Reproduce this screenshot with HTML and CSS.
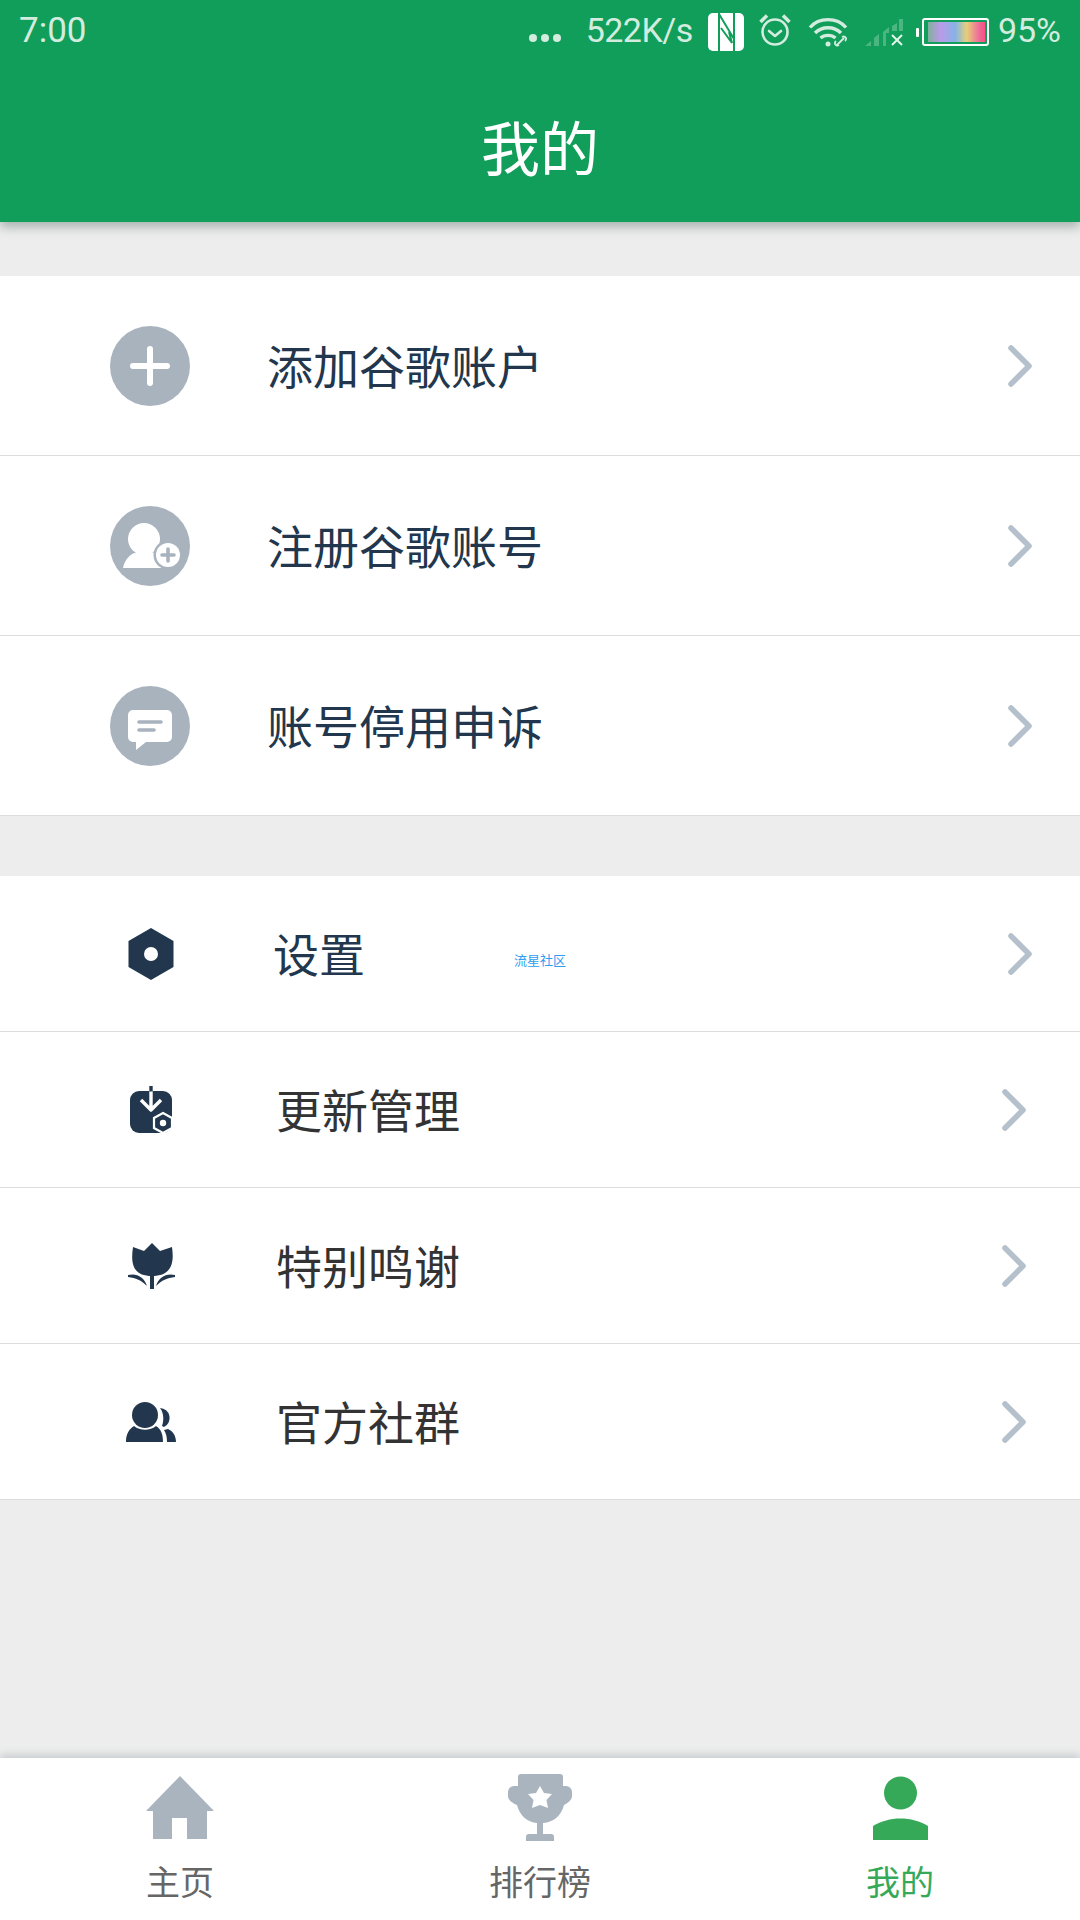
FILE: index.html
```html
<!DOCTYPE html>
<html lang="zh-CN">
<head>
<meta charset="utf-8">
<title>我的</title>
<link rel="stylesheet" href="styles.css">
</head>
<body>
<div class="app">
  <header class="header">
    <div class="status">
      <span class="time">7:00</span>
      <div class="status-right">
        <span class="dots"><i></i><i></i><i></i></span>
        <span class="speed">522K/s</span>
        <svg class="s-nfc" viewBox="0 0 36 38"><path fill="#fff" d="M5 0h26a5 5 0 0 1 5 5v28a5 5 0 0 1-5 5H5a5 5 0 0 1-5-5V5a5 5 0 0 1 5-5z"/><path fill="none" stroke="#119e5a" stroke-width="2" d="M11 0v38M11 1l15 25V0M26 26v12M13 15l11 15-3-11"/></svg>
        <svg class="s-alarm" viewBox="0 0 32 34" fill="none" stroke="#d3ecdf" stroke-width="2.600"><circle cx="16" cy="19" r="12.500"/><path d="M10 18l6 5 6-5" stroke-linecap="round" stroke-linejoin="round"/><path d="M1.500 9L8 2.500M30.500 9L24 2.500" stroke-width="3.500"/></svg>
        <svg class="s-wifi" viewBox="0 0 41 30" fill="none" stroke="#d3ecdf" stroke-width="3.400"><path d="M2 10.500C11-0 29-0 38 10.500"/><path d="M7 16c7-7 19-7 26 0"/><path d="M12.500 21c4-3.500 11-3.500 15 0"/><circle cx="20" cy="27" r="2.500" fill="#d3ecdf" stroke="none"/><path d="M28 29l8-8M31 28a3 3 0 0 1-4-1 3 3 0 0 1 1-3M34 20a3 3 0 0 1 4 1 3 3 0 0 1-1 3" stroke-width="1.800"/></svg>
        <svg class="s-signal" viewBox="0 0 38 27"><path fill="#4cb683" d="M0 27l6-5v5zM9 27v-8l5-4v12zM18 27V13l6-5v6h-3v13zM27 12V7l5-3v8zM34 12V0h4v12z"/><path fill="none" stroke="#e3f4ea" stroke-width="2" d="M27 16l10 10M37 16L27 26"/></svg>
        <span class="battery"><i class="nub"></i><span class="cell"><i class="fill"></i></span></span>
        <span class="pct">95%</span>
      </div>
    </div>
    <h1 class="title">我的</h1>
  </header>

  <main class="main">
    <section class="group group-a">
      <div class="row row-tall">
        <span class="badge"><svg viewBox="0 0 80 80"><path d="M40 23v34M23 40h34" stroke="#fff" stroke-width="6" stroke-linecap="round"/></svg></span>
        <span class="label">添加谷歌账户</span>
        <svg class="chev" viewBox="0 0 26 42"><path d="M3 3l18 18L3 39"/></svg>
      </div>
      <div class="row row-tall">
        <span class="badge"><svg viewBox="0 0 80 80"><circle cx="34" cy="33" r="16" fill="#fff"/><path fill="#fff" d="M27 44h14v2c8 2 15 6 18 16H13c2-9 7-14 14-16z"/><circle cx="58" cy="49" r="14.500" fill="#a8b3be"/><circle cx="58" cy="49" r="12" fill="#fff"/><path d="M58 43v12M52 49h12" stroke="#a8b3be" stroke-width="3.600" stroke-linecap="round"/></svg></span>
        <span class="label">注册谷歌账号</span>
        <svg class="chev" viewBox="0 0 26 42"><path d="M3 3l18 18L3 39"/></svg>
      </div>
      <div class="row row-tall">
        <span class="badge"><svg viewBox="0 0 80 80"><path fill="#fff" d="M23 24h34a5 5 0 0 1 5 5v22a5 5 0 0 1-5 5H36l-10 8v-8h-3a5 5 0 0 1-5-5V29a5 5 0 0 1 5-5z"/><path d="M29 36h22M29 44h15" stroke="#a8b3be" stroke-width="3.600" stroke-linecap="round"/></svg></span>
        <span class="label">账号停用申诉</span>
        <svg class="chev" viewBox="0 0 26 42"><path d="M3 3l18 18L3 39"/></svg>
      </div>
    </section>

    <section class="group group-b">
      <div class="row row-short">
        <span class="glyph"><svg class="g-set" viewBox="0 0 46 52"><path fill="#22374d" d="M23 0l22.500 13v26L23 52 .5 39V13z"/><circle cx="23" cy="26" r="7" fill="#fff"/></svg></span>
        <span class="label label-set">设置</span>
        <span class="mark">流星社区</span>
        <svg class="chev" viewBox="0 0 26 42"><path d="M3 3l18 18L3 39"/></svg>
      </div>
      <div class="row row-short row-in">
        <span class="glyph"><svg class="g-upd" viewBox="0 0 43 47"><path fill="#22374d" d="M9 5h24a9 9 0 0 1 9 9v24a9 9 0 0 1-9 9H9a9 9 0 0 1-9-9V14a9 9 0 0 1 9-9z"/><path d="M21 5v19M11 14l10 10 10-10" fill="none" stroke="#fff" stroke-width="3.400" stroke-linejoin="round"/><path d="M21 0v5.500" stroke="#22374d" stroke-width="3.400"/><path d="M33 27l9 5v10l-9 5-9-5V32z" fill="#22374d" stroke="#fff" stroke-width="2.200"/><circle cx="33" cy="37" r="3.200" fill="#fff"/></svg></span>
        <span class="label label-dark">更新管理</span>
        <svg class="chev" viewBox="0 0 26 42"><path d="M3 3l18 18L3 39"/></svg>
      </div>
      <div class="row row-short row-in">
        <span class="glyph"><svg class="g-tul" viewBox="0 0 47 46"><path fill="#22374d" d="M5 4l11 4 8-8 8 8 12-4c2 14 1 29-20 29S3 18 5 4z"/><path d="M22 30h4v16h-4z" fill="#22374d"/><path d="M0 32c9-2 16 2 19 11-6-6-11-8-19-9zM47 32c-9-2-16 2-19 11 6-6 11-8 19-9z" fill="#22374d"/></svg></span>
        <span class="label label-dark">特别鸣谢</span>
        <svg class="chev" viewBox="0 0 26 42"><path d="M3 3l18 18L3 39"/></svg>
      </div>
      <div class="row row-short row-in">
        <span class="glyph"><svg class="g-ppl" viewBox="0 0 50 40"><path fill="#22374d" d="M34 6a10 10 0 0 1 4 19l-2-1c2-5 2-13-2-18zM42 27c5 2 8 7 8 13h-9c0-5-1-9-3-12z"/><circle cx="19" cy="13" r="13" fill="#22374d"/><path fill="#22374d" d="M8 24c6 5 16 5 22 0 5 3 7 8 7 16H0c0-8 3-13 8-16z"/></svg></span>
        <span class="label label-dark">官方社群</span>
        <svg class="chev" viewBox="0 0 26 42"><path d="M3 3l18 18L3 39"/></svg>
      </div>
    </section>
  </main>

  <nav class="tabs">
    <div class="tab">
      <svg class="tab-home" viewBox="0 0 68 64"><path fill="#a9b4bf" d="M34 0l34 35h-7v28H41V42H26v21H7V35H0z"/></svg>
      <span class="tab-label">主页</span>
    </div>
    <div class="tab">
      <svg class="tab-cup" viewBox="0 0 64 68"><path fill="#a9b4bf" d="M10 3a3 3 0 0 1 3-3h39a3 3 0 0 1 3 3v9h3a6 6 0 0 1 6 6v4c0 4-4 7-8 9-3 11-10 17-21 18v11h-6V49C19 48 12 42 9 31c-5-2-9-5-9-9v-4a6 6 0 0 1 6-6h4z"/><path fill="#a9b4bf" d="M21 60h22a3 3 0 0 1 3 3v4H18v-4a3 3 0 0 1 3-3z"/><path fill="#fff" d="M32 12l4 7 8 1-5.500 6 1.500 8-8-3-8 3 1.500-8L20 20l8-1z"/></svg>
      <span class="tab-label">排行榜</span>
    </div>
    <div class="tab tab-on">
      <svg class="tab-me" viewBox="0 0 55 64"><circle cx="27.500" cy="17" r="16.500" fill="#36a958"/><path fill="#36a958" d="M0 50c16-10 39-10 55 0v14H0z"/></svg>
      <span class="tab-label">我的</span>
    </div>
  </nav>
</div>
</body>
</html>
```
FILE: styles.css
```css
* { box-sizing: border-box; }
html, body { margin: 0; padding: 0; }
body {
  width: 1080px;
  height: 1920px;
  overflow: hidden;
  font-family: "Noto Sans CJK SC", "Noto Sans", sans-serif;
  background: #ededed;
}
.app { display: flex; flex-direction: column; height: 1920px; }

.header {
  height: 222px;
  flex: none;
  background: #119e5a;
  box-shadow: 0 5px 10px rgba(40, 70, 60, .35);
  position: relative;
  z-index: 2;
}
.status {
  height: 60px;
  display: flex;
  align-items: center;
  justify-content: space-between;
  padding: 0 19px 0 19px;
  color: #d3ecdf;
  font-family: Roboto, sans-serif;
  font-size: 34px;
}
.time { font-size: 35px; }
.status-right { display: flex; align-items: center; height: 60px; }
.dots { display: flex; gap: 4px; margin-top: 16px; margin-right: 25px; }
.dots i { width: 8px; height: 8px; border-radius: 50%; background: #d3ecdf; }
.speed { margin-right: 15px; letter-spacing: -.5px; }
.s-nfc { width: 36px; height: 38px; margin-right: 15px; margin-top: 3px; }
.s-alarm { width: 32px; height: 34px; margin-right: 17px; }
.s-wifi { width: 41px; height: 30px; margin-right: 16px; margin-top: 3px; }
.s-signal { width: 38px; height: 27px; margin-right: 13px; margin-top: 4px; }
.battery { display: flex; align-items: center; margin-right: 9px; margin-top: 4px; }
.nub { width: 3px; height: 9px; background: #fff; border-radius: 1px; margin-right: 3px; }
.cell {
  width: 67px;
  height: 28px;
  border: 2px solid #fff;
  border-radius: 3px;
  padding: 2px 2px 2px 4px;
  display: block;
}
.fill {
  display: block;
  height: 100%;
  background: linear-gradient(90deg, #7fb09c 0, #bb9ae8 22%, #86b4e6 48%, #e6cf7a 68%, #f0699a 90%, #fb4f80 100%);
}
.title {
  margin: 0;
  padding-top: 27px;
  line-height: 118px;
  text-align: center;
  color: #fff;
  font-size: 59px;
  font-weight: 400;
}

.main { flex: 1; min-height: 0; }
.group { background: #fff; }
.group-a { margin-top: 54px; }
.group-b { margin-top: 60px; }
.row {
  display: flex;
  align-items: center;
  border-bottom: 1px solid #dcdcdc;
  position: relative;
}
.row-tall { height: 180px; padding: 0 46px 0 110px; }
.row-short { height: 156px; padding: 0 46px 0 128px; }
.row-short.row-in { padding-right: 52px; }
.badge {
  width: 80px;
  height: 80px;
  border-radius: 50%;
  background: #a8b3be;
  flex: none;
  margin-right: 77px;
  display: block;
}
.badge svg { display: block; width: 80px; height: 80px; }
.glyph {
  width: 46px;
  height: 52px;
  flex: none;
  margin-right: 99px;
  display: flex;
  align-items: center;
  justify-content: center;
}
.row-in .glyph { margin-right: 102px; }
.glyph svg { display: block; flex: none; }
.g-set { width: 46px; height: 52px; }
.g-upd { width: 43px; height: 47px; }
.g-tul { width: 47px; height: 46px; }
.g-ppl { width: 50px; height: 40px; }
.label { font-size: 46px; line-height: 62px; margin-top: -4px; color: #22374d; flex: 1; }
.label-dark { color: #333; }
.mark {
  position: absolute;
  left: 514px;
  top: 75px;
  font-size: 13px;
  line-height: 18px;
  color: #2f9df0;
}
.chev { width: 26px; height: 42px; flex: none; display: block; }
.chev path { fill: none; stroke: #b4c0cb; stroke-width: 5.500; stroke-linecap: round; stroke-linejoin: round; }

.tabs {
  height: 162px;
  flex: none;
  background: #fff;
  display: grid;
  grid-template-columns: repeat(3, 360px);
  box-shadow: 0 -3px 8px rgba(100, 115, 125, .28);
  position: relative;
}
.tab {
  display: flex;
  flex-direction: column;
  align-items: center;
  padding-top: 18px;
}
.tab svg { display: block; flex: none; }
.tab-home { width: 68px; height: 64px; }
.tab-cup { width: 64px; height: 68px; margin-top: -2px; margin-bottom: -2px; }
.tab-me { width: 55px; height: 64px; }
.tab-label { font-size: 34px; color: #666; line-height: 44px; margin-top: 19px; }
.tab-on .tab-label { color: #36a958; }
```
